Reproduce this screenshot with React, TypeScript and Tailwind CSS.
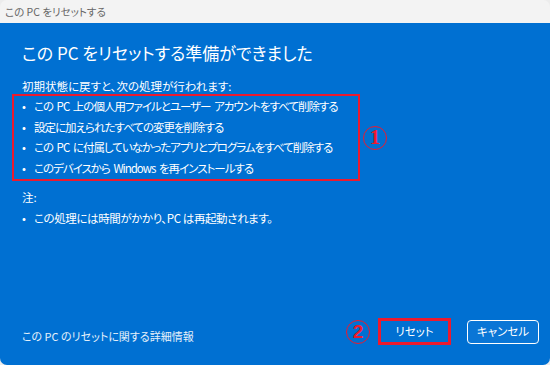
const jp = "font-['Noto_Sans_CJK_JP','Noto_Sans',sans-serif] [font-feature-settings:'palt']";

const steps = [
  'この PC 上の個人用ファイルとユーザー アカウントをすべて削除する',
  '設定に加えられたすべての変更を削除する',
  'この PC に付属していなかったアプリとプログラムをすべて削除する',
  'このデバイスから Windows を再インストールする',
];

function Mark({ n, serif }: { n: string; serif?: boolean }) {
  return (
    <span
      className={`flex h-[24px] w-[24px] shrink-0 items-center justify-center rounded-full border-[1.5px] border-[#ec1a2e] font-bold leading-none text-[#ec1a2e] ${
        serif ? "font-['Liberation_Serif',serif] text-[21px]" : "font-['Liberation_Sans',sans-serif] text-[19px]"
      }`}
    >
      {n}
    </span>
  );
}

export default function App() {
  return (
    <div className={`h-[365px] w-[550px] bg-[#ececec] ${jp}`}>
      <div className="flex h-full w-full flex-col overflow-hidden rounded-[7px]">
        {/* Title bar */}
        <div className="flex h-[23px] items-center bg-[#f3f3f3] pl-[5px] text-[10.5px] text-[#666]">
          この PC をリセットする
        </div>

        {/* Body */}
        <div className="flex flex-1 flex-col whitespace-nowrap bg-[#0070d2] px-[22px] pt-[18px] pb-[20px] text-[11.5px] text-white">
          <h1 className="text-[17px] leading-[24px]">この PC をリセットする準備ができました</h1>
          <p className="mt-[12px] leading-[18px]">初期状態に戻すと、次の処理が行われます:</p>

          <div className="ml-[-10px] mt-[-1px] flex items-center gap-[3px]">
            <ul className="w-[348px] shrink-0 border-2 border-[#ec1a2e] pb-[1px] leading-[20.6px]">
              {steps.map((s) => (
                <li key={s} className="flex">
                  <span className="w-[20px] shrink-0 pl-[8px]">•</span>
                  <span className="tracking-[-1px] [word-spacing:2px]">{s}</span>
                </li>
              ))}
            </ul>
            <Mark n="1" serif />
          </div>

          <p className="mt-[7px] leading-[18px]">注:</p>
          <p className="mt-[3px] flex leading-[18px]">
            <span className="w-[12px] shrink-0">•</span>
            <span className="tracking-[-0.4px]">この処理には時間がかかり、PC は再起動されます。</span>
          </p>

          {/* Footer */}
          <div className="mt-auto flex items-center">
            <span className="mt-[9px] flex-1 text-[11px] leading-[18px] text-[#e6f0fa]">
              この PC のリセットに関する詳細情報
            </span>
            <Mark n="2" />
            <div className="ml-[8px] flex h-[27px] w-[73px] items-center justify-center border-[3px] border-[#ec1a2e]">
              リセット
            </div>
            <button className="mr-[-11px] ml-[16px] flex h-[24px] w-[72px] items-center justify-center rounded-[4px] border border-white bg-[#0a76d6]">
              キャンセル
            </button>
          </div>
        </div>
      </div>
    </div>
  );
}
